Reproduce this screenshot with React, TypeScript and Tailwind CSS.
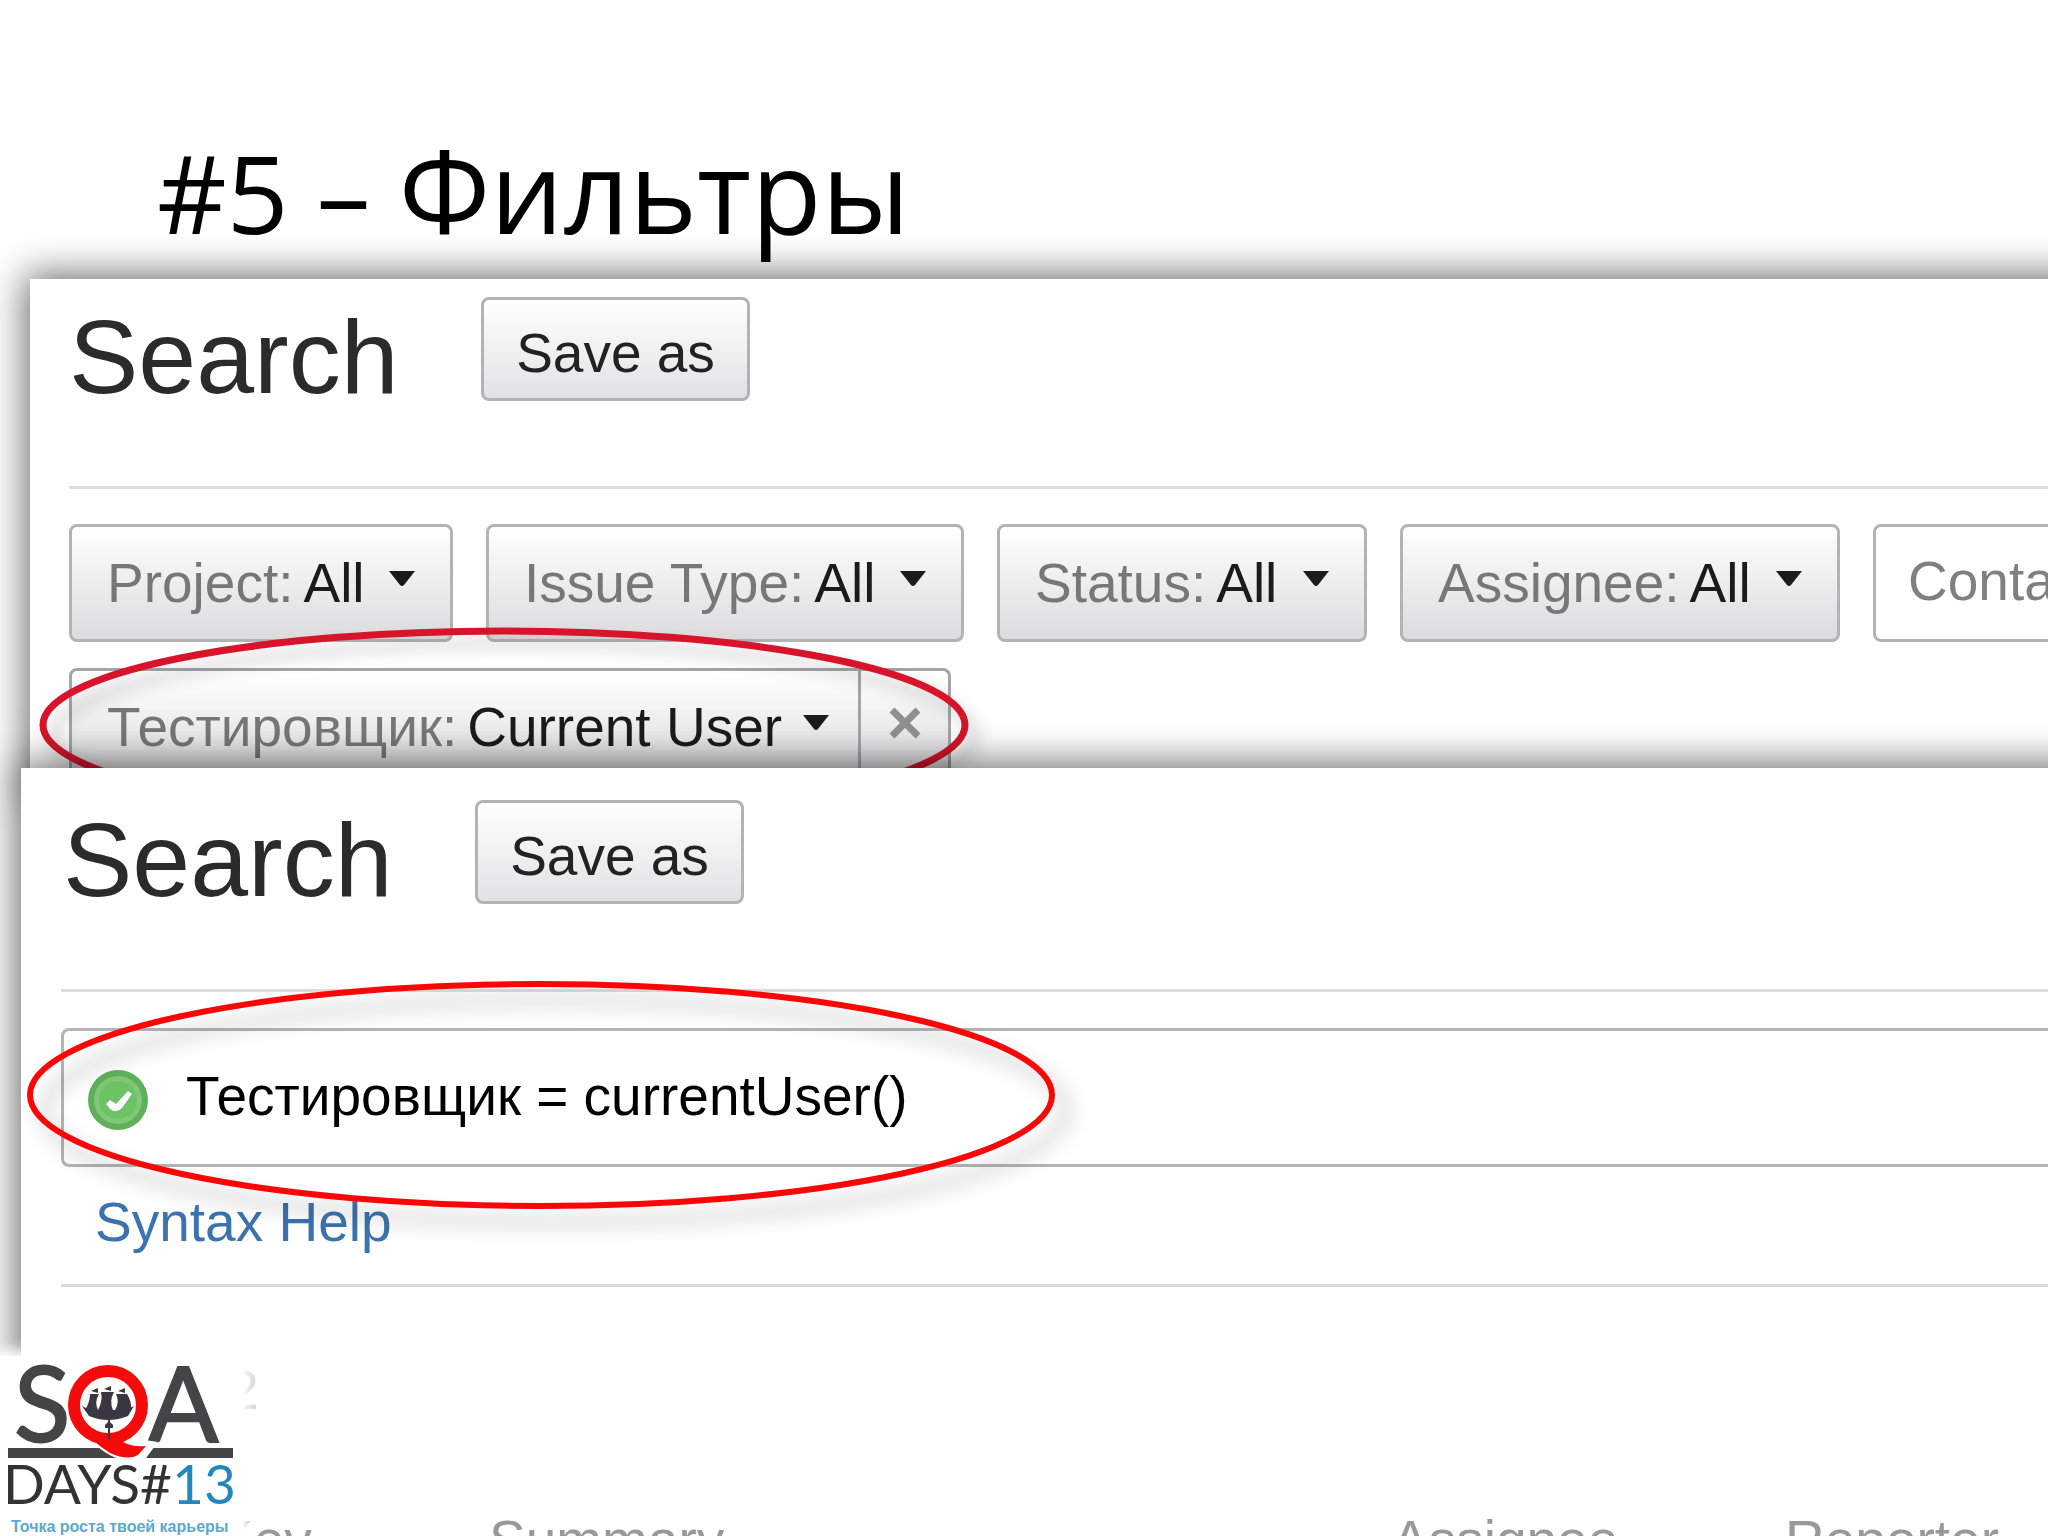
import React from "react";

const filters = [
  { id: "project", label: "Project:", width: "w-[384px]" },
  { id: "issue-type", label: "Issue Type:", width: "w-[478px]" },
  { id: "status", label: "Status:", width: "w-[370px]" },
  { id: "assignee", label: "Assignee:", width: "w-[440px]" },
];

function Caret() {
  return (
    <svg viewBox="0 0 26 16" className="w-[26px] h-4 ml-auto shrink-0 mb-2" aria-hidden="true">
      <path d="M0 0H26L15 14Q13 16 11 14Z" fill="#1b1b1b" />
    </svg>
  );
}

function Filter({ id, label, value, className }: { id: string; label: string; value: string; className: string }) {
  return (
    <div className={`pl-[35px] flex items-center gap-[10px] shrink-0 ${className}`}>
      <label htmlFor={id} className="text-[#777] whitespace-nowrap">
        {label}
      </label>
      <select id={id} className="appearance-none bg-transparent text-[#1b1b1b] outline-none">
        <option>{value}</option>
      </select>
      <Caret />
    </div>
  );
}

function SearchHeader() {
  return (
    <div className="h-[104px] flex items-start">
      <h2 className="w-[412px] pt-2 text-[104px] leading-[104px] text-[#2b2b2b]">Search</h2>
      <button className="w-[269px] h-[104px] pt-2 border-[3px] border-[#b3b3b6] rounded-lg bg-linear-to-b from-white to-[#e2e2e4] text-[#222]">
        Save as
      </button>
    </div>
  );
}

function FilterPanel() {
  return (
    <section className="relative ml-[30px] -mr-12 pl-[39px] pt-[18px] bg-white shadow-[0_0_36px_4px_rgba(0,0,0,0.6)]">
      <SearchHeader />
      <div className="mt-[85px] border-t-[3px] border-[#dedde0]" />
      <div className="mt-[35px] flex gap-[33px]">
        {filters.map((f) => (
          <Filter
            key={f.id}
            id={f.id}
            label={f.label}
            value="All"
            className={`${f.width} h-[118px] pr-[35px] border-[3px] border-[#b3b3b6] rounded-lg bg-linear-to-b from-white to-[#dcdcde]`}
          />
        ))}
        <input
          aria-label="Contains text"
          placeholder="Contains text"
          className="w-[440px] h-[118px] px-8 pb-1 shrink-0 border-[3px] border-[#b3b3b6] rounded-lg bg-white placeholder:text-[#808080]"
        />
      </div>
      <div className="mt-[26px] w-[882px] flex border-[3px] border-[#a5a5a8] rounded-lg bg-linear-to-b from-white to-[#dcdcde]">
        <Filter id="tester" label="Тестировщик:" value="Current User" className="w-[786px] h-28 pr-[29px]" />
        <button aria-label="Remove filter" className="flex-1 flex items-center justify-center border-l-[3px] border-[#a5a5a8]">
          <svg viewBox="0 0 34 34" className="w-[34px] h-[34px] mb-2" aria-hidden="true">
            <path d="M4 4L30 30M30 4L4 30" stroke="#919191" strokeWidth="7" />
          </svg>
        </button>
      </div>
      <svg
        viewBox="0 0 930 196"
        className="absolute left-[10px] top-[348px] w-[930px] h-[196px] overflow-visible pointer-events-none drop-shadow-[10px_12px_8px_rgba(0,0,0,0.2)]"
        aria-hidden="true"
      >
        <ellipse cx="464" cy="98" rx="461" ry="94" fill="none" stroke="#d8142a" strokeWidth="7" />
      </svg>
    </section>
  );
}

function QueryPanel() {
  return (
    <section className="relative flex-1 ml-[21px] -mr-12 -mt-[18px] pl-10 pt-8 bg-white shadow-[0_0_36px_4px_rgba(0,0,0,0.6)]">
      <div className="pl-[2px]">
        <SearchHeader />
      </div>
      <div className="mt-[85px] border-t-[3px] border-[#dcdbde]" />
      <div className="mt-9 h-[139px] pl-6 flex items-center gap-[38px] border-[3px] border-r-0 border-[#b5b5b8] rounded-l-lg">
        <svg viewBox="0 0 60 60" className="w-[60px] h-[60px] shrink-0 mt-1" aria-hidden="true">
          <circle cx="30" cy="30" r="30" fill="#5fb05b" />
          <circle cx="30" cy="30" r="24" fill="#80c777" />
          <circle cx="30" cy="30" r="19" fill="#6dc266" />
          <path d="M18 34L22 30L28 34L40 21L44 24L34 38Q28 44 22 39Z" fill="#fff" />
        </svg>
        <input aria-label="Query" defaultValue="Тестировщик = currentUser()" className="flex-1 min-w-0 pb-1 text-black outline-none" />
      </div>
      <a href="#" className="inline-block mt-[23px] ml-[34px] leading-[64px] text-[#3b73af]">
        Syntax Help
      </a>
      <div className="mt-[30px] border-t-[3px] border-[#dcdbde]" />
      <p className="mt-[71px] pl-[167px] leading-[64px] text-[#c8ccd4]">2</p>
      <table className="mt-[86px] w-full table-fixed leading-[64px] text-[#999]">
        <thead>
          <tr className="text-left">
            <th className="w-[428px] pl-[156px] font-normal">Key</th>
            <th className="w-[903px] font-normal">Summary</th>
            <th className="w-[393px] font-normal">Assignee</th>
            <th className="font-normal">Reporter</th>
          </tr>
        </thead>
      </table>
      <svg
        viewBox="0 0 1028 228"
        className="absolute left-[7px] top-[213px] w-[1028px] h-[228px] overflow-visible pointer-events-none drop-shadow-[14px_16px_10px_rgba(0,0,0,0.28)]"
        aria-hidden="true"
      >
        <ellipse cx="513" cy="114" rx="511" ry="111" fill="none" stroke="#fb0606" strokeWidth="6" />
      </svg>
    </section>
  );
}

function Logo() {
  return (
    <div className="absolute left-0 bottom-0 bg-white shadow-[0_0_12px_6px_#fff]">
      <svg viewBox="0 0 244 180" className="w-[244px] h-[180px]" role="img" aria-label="SQA Days 13">
        <g fontFamily="Lato, sans-serif" fill="#454547">
          <text x="14" y="86" fontSize="104" stroke="#454547" strokeWidth="2">S</text>
          <text x="148" y="86" fontSize="104" stroke="#454547" strokeWidth="2">A</text>
        </g>
        <path d="M8 92H233V102H8Z" fill="#454547" />
        <path d="M76 64Q92 92 116 102Q134 109 146 102L158 86L120 80Z" fill="#fff" />
        <path d="M76 66Q92 86 110 97Q128 105 138 99L146 90Q128 92 118 82Z" fill="#f40b0b" />
        <ellipse cx="108" cy="49" rx="34" ry="34" fill="#fff" stroke="#f40b0b" strokeWidth="12" />
        <g fill="#3b3740">
          <path d="M82 50L90 54H126L134 50L128 60Q108 68 89 60Z" />
          <path d="M90 38H99Q94 46 98 54H85Q90 46 90 38ZM101 36H114Q109 45 113 54H98Q103 45 101 36ZM116 38H127Q132 46 131 54H115Q120 46 116 38Z" />
          <path d="M91 35L98 32V37ZM104 33L111 30V35ZM118 35L125 32V37Z" />
          <path d="M108 62H110V83H108ZM105 69L109 65L113 69V72H105Z" />
        </g>
        <g fontFamily="Lato, sans-serif" fontSize="55">
          <text x="3" y="148" fill="#333">DAYS#</text>
          <text x="172" y="148" fill="#2387bd">13</text>
        </g>
        <text x="11" y="176" fontFamily="Liberation Sans, sans-serif" fontWeight="bold" fontSize="16" fill="#5aa9cf">
          Точка роста твоей карьеры
        </text>
      </svg>
    </div>
  );
}

function App() {
  return (
    <main className="relative h-screen overflow-hidden flex flex-col bg-white font-['Liberation_Sans',sans-serif] text-[55px] leading-[64px]">
      <h1 className="h-[279px] shrink-0 pl-[157px] pt-[108px] font-['Open_Sans',sans-serif] text-[115px] leading-[164px] text-black">
        <span className="text-[108px]">#5 – </span>Фильтры
      </h1>
      <FilterPanel />
      <QueryPanel />
      <Logo />
    </main>
  );
}

export default App;
